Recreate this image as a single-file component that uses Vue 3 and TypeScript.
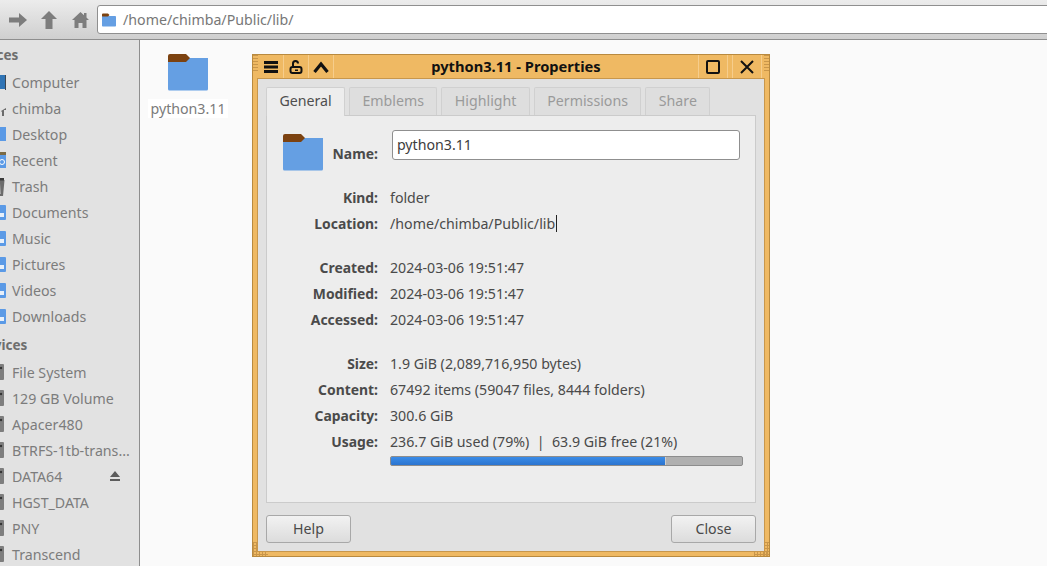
<script setup lang="ts">
interface Place {
  label: string;
  icon: string;
  eject?: boolean;
}

const places: Place[] = [
  { label: 'Computer', icon: 'computer' },
  { label: 'chimba', icon: 'home' },
  { label: 'Desktop', icon: 'desktop' },
  { label: 'Recent', icon: 'recent' },
  { label: 'Trash', icon: 'trash' },
  { label: 'Documents', icon: 'folder' },
  { label: 'Music', icon: 'folder' },
  { label: 'Pictures', icon: 'folder' },
  { label: 'Videos', icon: 'folder' },
  { label: 'Downloads', icon: 'folder' },
];

const devices: Place[] = [
  { label: 'File System', icon: 'drive' },
  { label: '129 GB Volume', icon: 'drive' },
  { label: 'Apacer480', icon: 'drive' },
  { label: 'BTRFS-1tb-trans...', icon: 'drive' },
  { label: 'DATA64', icon: 'drive', eject: true },
  { label: 'HGST_DATA', icon: 'drive' },
  { label: 'PNY', icon: 'drive' },
  { label: 'Transcend', icon: 'drive' },
];

const tabs = ['General', 'Emblems', 'Highlight', 'Permissions', 'Share'];

const dates = [
  ['Created:', '2024-03-06 19:51:47'],
  ['Modified:', '2024-03-06 19:51:47'],
  ['Accessed:', '2024-03-06 19:51:47'],
];

const usedPercent = 78;
</script>

<template>
  <div class="fm">
    <header class="toolbar">
      <svg class="tool tool--forward" width="18" height="14" viewBox="0 0 18 14">
        <path d="M0 4.500h10V0l8 7-8 7V9.500H0z" fill="#7d7d7d" />
      </svg>
      <svg class="tool tool--up" width="16" height="18" viewBox="0 0 16 18">
        <path d="M8 0l8 8h-4.500v10h-7V8H0z" fill="#7d7d7d" />
      </svg>
      <svg class="tool tool--home" width="17" height="17" viewBox="0 0 17 17">
        <path d="M8.500 1l3.500 3.200V2h2.500v4.500L17 9h-2.500v8h-4v-5h-4v5h-4V9H0z" fill="#7d7d7d" />
      </svg>
      <div class="pathbar">
        <svg width="14" height="14" viewBox="0 0 14 14">
          <rect x="0" y="3" width="14" height="10.500" rx=".8" fill="#659fe3" />
          <path d="M0 1.500a1 1 0 0 1 1-1h5l1.500 1.500-1.500 1.500H0z" fill="#7c4210" />
        </svg>
        <span>/home/chimba/Public/lib/</span>
      </div>
    </header>

    <div class="body">
      <aside class="sidebar">
        <div class="side-head">Places</div>
        <div v-for="item in places" :key="item.label" class="side-row">
          <svg class="side-icon" width="16" height="20" viewBox="0 0 16 20">
            <template v-if="item.icon === 'computer'">
              <rect x="0" y="3" width="17" height="14" fill="#2f74b5" />
              <rect x="15" y="3" width="2" height="15" fill="#3d4650" />
            </template>
            <template v-else-if="item.icon === 'home'">
              <path d="M11 13l5-3v2h-2v6h-2v-4z" fill="#6b6b6b" />
            </template>
            <template v-else-if="item.icon === 'desktop'">
              <path d="M0 3h16v14H0z" fill="#5b9ae6" />
            </template>
            <template v-else-if="item.icon === 'recent'">
              <rect x="0" y="2" width="16" height="3" fill="#7a6a45" />
              <rect x="0" y="5" width="16" height="13" fill="#5b9ae6" />
              <circle cx="12" cy="12" r="2.500" fill="none" stroke="#fff" />
            </template>
            <template v-else-if="item.icon === 'trash'">
              <path d="M0 4h14.500l-1.500 16H0z" fill="#6c6c6c" />
              <path d="M0 2h14v2.500H0z" fill="#3a3a3a" />
              <path d="M10 7l1 11h-1.500L9 7z" fill="#a8a8a8" />
            </template>
            <template v-else>
              <rect x="0" y="3" width="16" height="15" rx="1" fill="#5b9ae6" />
              <path d="M9 11h5v4H9z" fill="#e8f0fa" />
            </template>
          </svg>
          <span class="side-label">{{ item.label }}</span>
        </div>
        <div class="side-head side-head--next">Devices</div>
        <div v-for="item in devices" :key="item.label" class="side-row">
          <svg class="side-icon" width="16" height="20" viewBox="0 0 16 20">
            <rect x="0" y="2" width="14" height="16" rx="1" fill="#7e7e7e" />
            <circle cx="11" cy="6" r="1.200" fill="#333" />
          </svg>
          <span class="side-label">{{ item.label }}</span>
          <svg v-if="item.eject" class="eject" width="12" height="10" viewBox="0 0 12 10">
            <path d="M6 0l5 6H1zM1 8h10v2H1z" fill="#5c5c5c" />
          </svg>
        </div>
      </aside>

      <main class="canvas">
        <div class="file">
          <svg width="42" height="38" viewBox="0 0 42 38">
            <path d="M1 5h40v31a1.500 1.500 0 0 1-1.500 1.500h-37A1.500 1.500 0 0 1 1 36z" fill="#659fe3" />
            <path d="M1 3a2 2 0 0 1 2-2h16l4 4-4 4H1z" fill="#7c4210" />
          </svg>
          <span class="file-name">python3.11</span>
        </div>

        <section class="dialog">
          <div class="grip grip--tl"></div>
          <div class="grip grip--tr"></div>
          <div class="grip grip--bl"></div>
          <div class="grip grip--br"></div>

          <div class="titlebar">
            <div class="title-btns">
              <button class="wm-btn">
                <svg width="14" height="14" viewBox="0 0 14 14">
                  <path d="M0 1h14v3H0zM0 5.500h14v3H0zM0 10h14v3H0z" fill="#111" />
                </svg>
              </button>
              <button class="wm-btn">
                <svg width="14" height="14" viewBox="0 0 14 14">
                  <path d="M4 6V3.500a2.500 2.500 0 0 1 5 0" fill="none" stroke="#111" stroke-width="2" />
                  <rect x="1.500" y="7" width="11" height="6" rx="2" fill="none" stroke="#111" stroke-width="2" />
                  <rect x="6" y="9.500" width="3" height="1.500" fill="#111" />
                </svg>
              </button>
              <button class="wm-btn">
                <svg width="16" height="14" viewBox="0 0 16 14">
                  <path d="M1.500 12L8 4l6.500 8" fill="none" stroke="#111" stroke-width="3.200" />
                </svg>
              </button>
            </div>
            <h1 class="title">python3.11 - Properties</h1>
            <div class="title-btns title-btns--right">
              <button class="wm-btn wm-btn--wide">
                <svg width="14" height="14" viewBox="0 0 14 14">
                  <rect x="1" y="1" width="12" height="12" rx="1" fill="none" stroke="#111" stroke-width="2" />
                </svg>
              </button>
              <button class="wm-btn wm-btn--wide">
                <svg width="14" height="14" viewBox="0 0 14 14">
                  <path d="M1 1l12 12M13 1L1 13" fill="none" stroke="#111" stroke-width="2" />
                </svg>
              </button>
            </div>
          </div>

          <div class="dialog-body">
            <nav class="tabs">
              <div
                v-for="(tab, index) in tabs"
                :key="tab"
                class="tab"
                :class="{ 'tab--active': index === 0 }"
              >{{ tab }}</div>
            </nav>

            <div class="panel">
              <div class="name-row">
                <svg class="name-icon" width="42" height="38" viewBox="0 0 42 38">
                  <path d="M1 5h40v31a1.500 1.500 0 0 1-1.500 1.500h-37A1.500 1.500 0 0 1 1 36z" fill="#659fe3" />
                  <path d="M1 3a2 2 0 0 1 2-2h16l4 4-4 4H1z" fill="#7c4210" />
                </svg>
                <span class="name-label">Name:</span>
                <div class="entry">python3.11</div>
              </div>

              <div class="info">
                <span class="key">Kind:</span><span>folder</span>
                <span class="key">Location:</span><span>/home/chimba/Public/lib<i class="caret"></i></span>
              </div>

              <div class="info info--spaced">
                <template v-for="row in dates" :key="row[0]">
                  <span class="key">{{ row[0] }}</span><span>{{ row[1] }}</span>
                </template>
              </div>

              <div class="info info--spaced">
                <span class="key">Size:</span><span>1.9 GiB (2,089,716,950 bytes)</span>
                <span class="key">Content:</span><span>67492 items (59047 files, 8444 folders)</span>
                <span class="key">Capacity:</span><span>300.6 GiB</span>
                <span class="key">Usage:</span><span>236.7 GiB used (79%) &nbsp;|&nbsp; 63.9 GiB free (21%)</span>
              </div>

              <div class="usage">
                <div class="usage-fill" :style="{ width: usedPercent + '%' }"></div>
              </div>
            </div>

            <div class="actions">
              <button class="btn">Help</button>
              <button class="btn">Close</button>
            </div>
          </div>
        </section>
      </main>
    </div>
  </div>
</template>

<style>
html,
body {
  margin: 0;
  overflow: hidden;
}
</style>

<style scoped>
.fm {
  display: flex;
  flex-direction: column;
  width: 1047px;
  height: 566px;
  overflow: hidden;
  font-family: 'Noto Sans', sans-serif;
  font-size: 14.2px;
  color: #4a4a4a;
}

.toolbar {
  display: flex;
  align-items: center;
  flex: none;
  height: 39px;
  border-bottom: 1px solid #8e8e8e;
  background: linear-gradient(#ececec, #cfcfcf);
}

.tool {
  flex: none;
}

.tool--forward {
  margin-left: 9px;
}

.tool--up {
  margin-left: 14px;
}

.tool--home {
  margin-left: 15px;
}

.pathbar {
  display: flex;
  align-items: center;
  gap: 7px;
  flex: 1;
  height: 27px;
  margin-left: 8px;
  margin-right: -10px;
  padding-left: 4px;
  border: 1px solid #8f8f8f;
  border-radius: 3px;
  background: #fff;
  color: #777;
}

.body {
  display: flex;
  flex: 1;
  min-height: 0;
}

.sidebar {
  flex: none;
  width: 139px;
  overflow: hidden;
  border-right: 1px solid #8e8e8e;
  background: #e2e2e2;
  color: #7c7c7c;
}

.side-head {
  height: 29px;
  margin-left: -24px;
  font-size: 13.5px;
  font-weight: 700;
  line-height: 30px;
  color: #6e6e6e;
}

.side-head--next {
  height: 30px;
  line-height: 32px;
}

.side-row {
  display: flex;
  align-items: center;
  gap: 6px;
  height: 26px;
  margin-left: -10px;
}

.side-icon {
  flex: none;
}

.side-label {
  white-space: nowrap;
}

.eject {
  margin-left: auto;
  margin-right: 18px;
}

.canvas {
  position: relative;
  flex: 1;
  background: #fafafa;
}

.file {
  display: flex;
  flex-direction: column;
  align-items: center;
  width: 90px;
  margin-left: 3px;
  padding-top: 13px;
  color: #7b7b7b;
}

.file-name {
  margin-top: 8px;
  padding: 0 2px;
  background: #fff;
}

.dialog {
  position: absolute;
  top: 14px;
  left: 112px;
  display: flex;
  flex-direction: column;
  width: 518px;
  height: 503px;
  box-sizing: border-box;
  border: 1px solid #b98a3f;
  background: #efb963;
}

.grip {
  position: absolute;
  width: 5px;
  height: 14px;
  background-image:
    linear-gradient(#c9964a 1px, transparent 1px),
    linear-gradient(90deg, #c9964a 1px, transparent 1px);
  background-size: 3px 3px;
}

.grip--tl,
.grip--tr {
  top: 0;
  height: 18px;
  background-image: linear-gradient(#c9964a 1px, transparent 1px);
}

.grip--tl {
  left: 0;
}

.grip--tr {
  right: 0;
}

.grip--bl,
.grip--br {
  bottom: 0;
}

.grip--bl {
  left: 0;
}

.grip--br {
  right: 0;
}

.grip--bl::after,
.grip--br::after {
  content: '';
  position: absolute;
  bottom: 0;
  width: 15px;
  height: 5px;
  background-image:
    linear-gradient(#c9964a 1px, transparent 1px),
    linear-gradient(90deg, #c9964a 1px, transparent 1px);
  background-size: 3px 3px;
}

.grip--bl::after {
  left: 0;
}

.grip--br::after {
  right: 0;
}

.titlebar {
  display: flex;
  align-items: center;
  flex: none;
  height: 24px;
  margin: 0 5px;
}

.title-btns {
  display: flex;
  flex: none;
  box-sizing: border-box;
  width: 110px;
  height: 100%;
  padding-left: 1px;
}

.title-btns--right {
  justify-content: flex-end;
  gap: 4px;
  width: 100px;
  padding: 0 2px 0 0;
}

.wm-btn {
  display: flex;
  align-items: center;
  justify-content: center;
  width: 25px;
  height: 100%;
  padding: 0;
  border: 0;
  border-right: 1px solid #f6cd8c;
  background: #efb963;
}

.wm-btn--wide {
  width: 30px;
  border-left: 1px solid #f6cd8c;
}

.title {
  flex: 1;
  margin: 0 0 2px;
  font-size: 14.67px;
  font-weight: 700;
  line-height: 22px;
  text-align: center;
  color: #111;
}

.dialog-body {
  display: flex;
  flex-direction: column;
  flex: 1;
  margin: 0 5px 5px;
  padding: 8px 8px 7px;
  outline: 1px solid #c8974c;
  background: #e1e1e1;
}

.tabs {
  display: flex;
  flex: none;
  gap: 4px;
  height: 28px;
}

.tab {
  box-sizing: border-box;
  height: 28px;
  padding: 0 12.4px;
  border: 1px solid #d0d0d0;
  border-bottom: 0;
  border-radius: 2px 2px 0 0;
  background: #dedede;
  color: #9a9a9a;
  line-height: 25px;
}

.tab--active {
  position: relative;
  z-index: 1;
  height: 29px;
  background: #ededed;
  color: #4f4f4f;
}

.panel {
  flex: none;
  box-sizing: border-box;
  height: 388px;
  padding: 15px 15px 0 0;
  border: 1px solid #cbcbcb;
  background: #ededed;
}

.name-row {
  display: flex;
  align-items: flex-start;
  height: 53px;
  padding-left: 15px;
}

.name-icon {
  flex: none;
  margin-top: 2px;
}

.name-label {
  width: 51px;
  margin-top: 13px;
  margin-left: 3px;
  font-size: 13.9px;
  font-weight: 700;
  text-align: right;
}

.entry {
  box-sizing: border-box;
  width: 349px;
  height: 30px;
  margin-top: -1px;
  margin-left: 14px;
  padding-left: 4px;
  border: 1px solid #8f8f8f;
  border-radius: 3px;
  background: #fff;
  line-height: 27px;
  color: #3c3c3c;
}

.info {
  display: grid;
  grid-template-columns: 111px 1fr;
  grid-auto-rows: 26px;
  column-gap: 12px;
  align-items: center;
}

.info--spaced {
  margin-top: 18px;
}

.key {
  font-size: 13.9px;
  font-weight: 700;
  text-align: right;
}

.caret {
  display: inline-block;
  width: 1px;
  height: 17px;
  margin-left: 1px;
  vertical-align: -3px;
  background: #222;
}

.usage {
  box-sizing: border-box;
  width: 353px;
  height: 10px;
  margin-top: 2px;
  margin-left: 123px;
  overflow: hidden;
  border: 1px solid #8d8d8d;
  border-radius: 2px;
  background: #b0b0b0;
}

.usage-fill {
  height: 100%;
  border-right: 1px solid #cfcfcf;
  background: linear-gradient(#3a8ce8, #2b74cf);
}

.actions {
  display: flex;
  justify-content: space-between;
  margin-top: 12px;
}

.btn {
  width: 85px;
  height: 28px;
  padding: 0 0 2px;
  border: 1px solid #a8a8a8;
  border-radius: 3px;
  background: linear-gradient(#f2f2f2, #dcdcdc);
  font: inherit;
  color: #4a4a4a;
}
</style>
